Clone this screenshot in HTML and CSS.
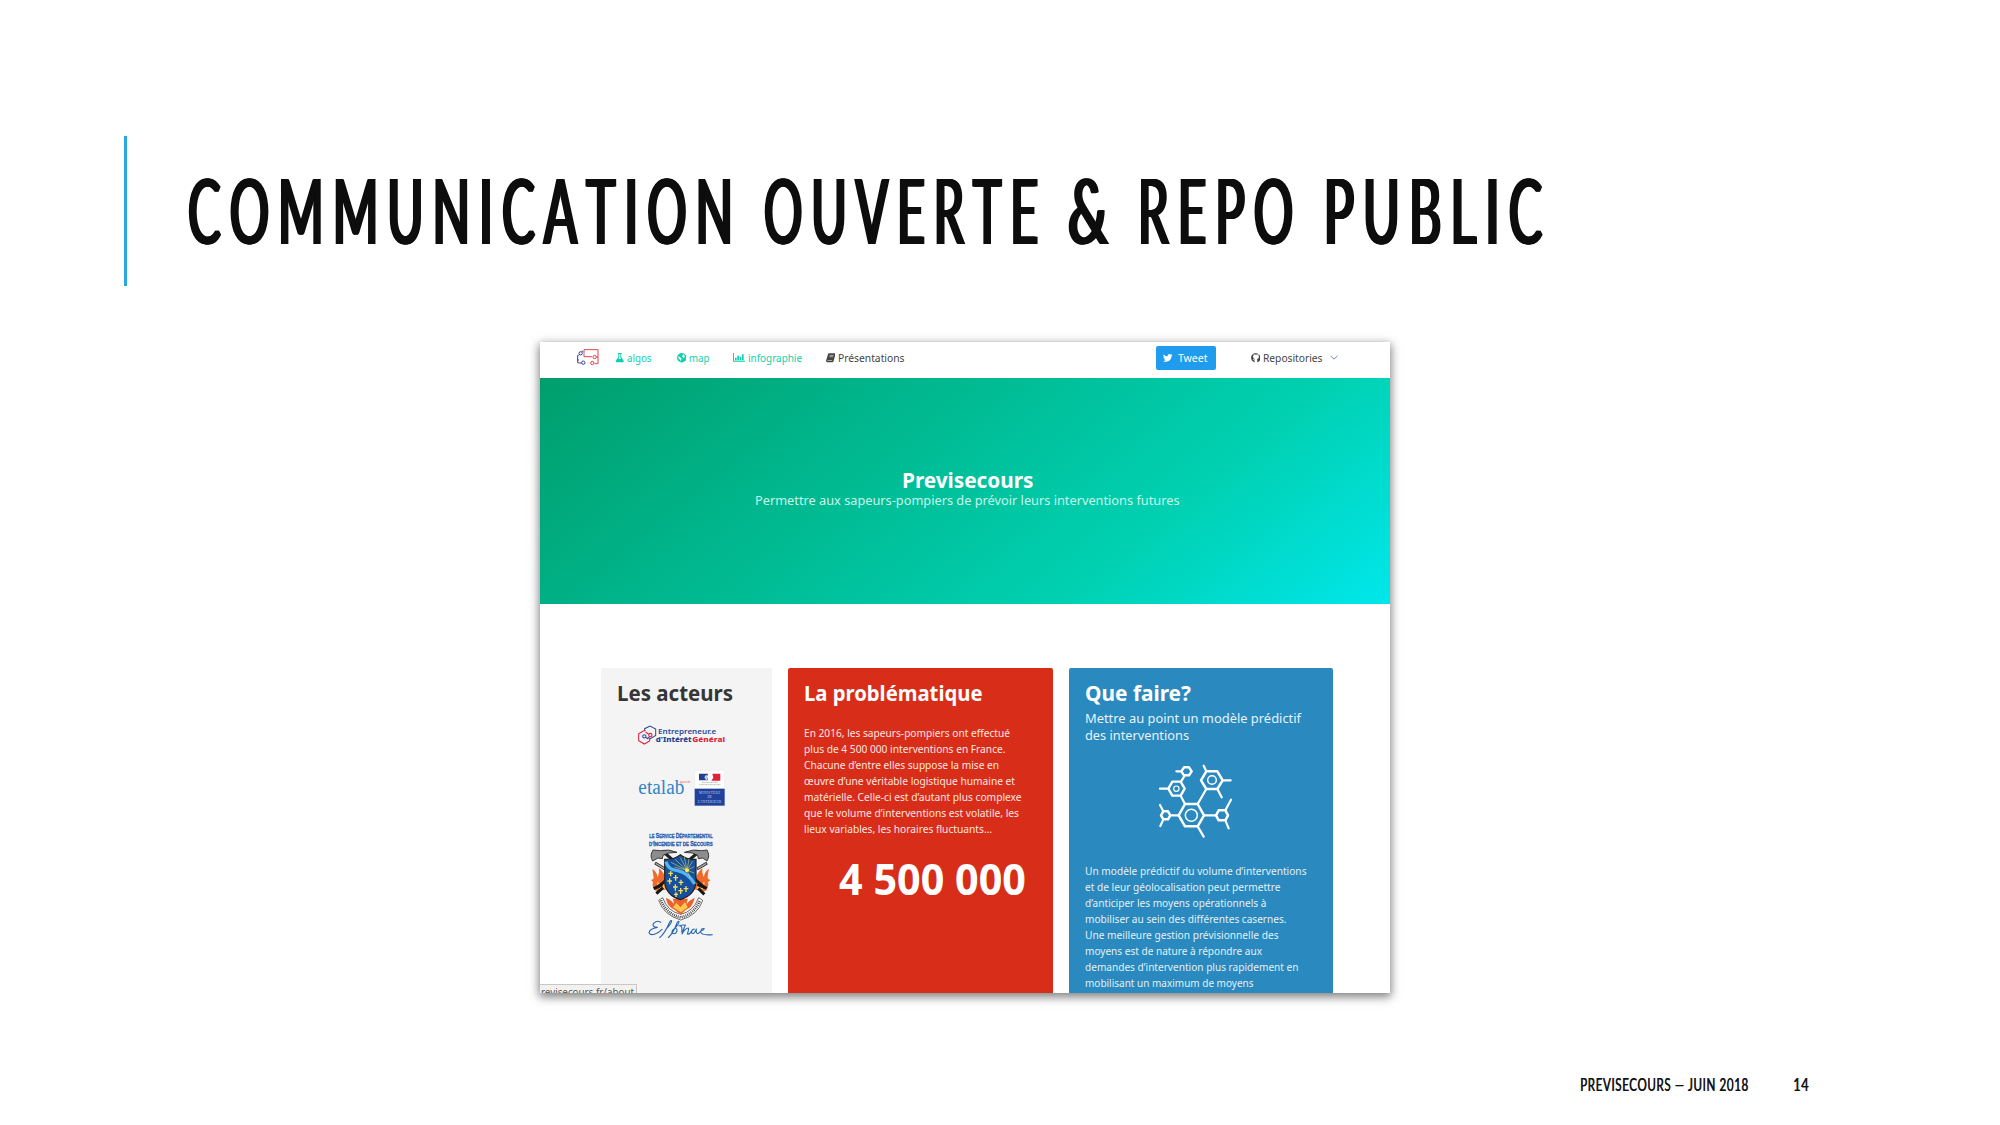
FILE: index.html
```html
<!DOCTYPE html>
<html lang="fr">
<head>
<meta charset="utf-8">
<title>Previsecours – Communication ouverte</title>
<link rel="stylesheet" href="styles.css">
</head>
<body>
<div class="slide">
  <header class="heading">
    <h1 class="title">
      <span class="word w1"><span data-width="545">COMMUNICATION</span></span>
      <span class="word w2"><span data-width="274">OUVERTE</span></span>
      <span class="word w3"><span data-width="40">&amp;</span></span>
      <span class="word w4"><span data-width="155">REPO</span></span>
      <span class="word w5"><span data-width="218">PUBLIC</span></span>
    </h1>
  </header>

  <section class="browser">
    <nav class="nav">
      <svg class="brand" viewBox="138 56 72 56" fill="none" stroke-width="3">
        <g stroke="#3d3f98"><path d="M148 77v-3M146 78h-3v14h4M143 92v8l5 1M155 66h4"/><circle cx="152" cy="72" r="5"/><circle cx="160" cy="100" r="5"/><path d="M148 101h7"/></g>
        <g stroke="#e0434f"><path d="M162 72V61h42v42h-10M162 73v9h24"/><circle cx="194" cy="83" r="5"/><circle cx="187" cy="101" r="5"/><path d="M199 83h5"/></g>
      </svg>
      <a class="item green algos">
        <svg class="ico" viewBox="0 0 24 27" fill="currentColor"><path d="M6.500 0h11v3H16v8l7.500 12q1 3-2 3.500h-19q-3-.5-2-3.500L8 11V3H6.500zM10.500 3v9l-2.500 4h8l-2.500-4V3z"/></svg>
        <span data-width="24.500">algos</span></a>
      <a class="item green map">
        <svg class="ico" viewBox="0 0 26 26"><circle cx="13" cy="13" r="13" fill="currentColor"/><path d="M16 3l5 3-2 2 3 2-3 4-4-3-1-3 2-2zM4 9l5 3 4 3-4 7-2-5-4-4z" fill="#fff"/></svg>
        <span data-width="20.500">map</span></a>
      <a class="item green info">
        <svg class="ico wide" viewBox="0 0 36 27" fill="currentColor"><path d="M0 0h3v23.500h33v3H0zM6 14h5v8H6zM13 8h5v14h-5zM20 11h5v11h-5zM27 4h5v18h-5z"/></svg>
        <span data-width="54">infographie</span></a>
      <a class="item dark pres">
        <svg class="ico book" viewBox="0 0 28 26" ><path d="M9 0h18q1.500 1 1 3l-6 20q-1 3-3 3H4q-4 0-4-4L6 3q1-3 3-3z" fill="currentColor"/><path d="M11 6h11M10 10h11M4 21h14" stroke="#fff" stroke-width="1.600"/></svg>
        <span data-width="66.500">Présentations</span></a>
      <a class="tweet">
        <svg class="bird" viewBox="0 0 24 20" fill="currentColor"><path d="M24 2.400q-1.200 1.700-2.500 2.500C22 13 16 19.500 7.600 19.500Q3.300 19.500 0 17.300q4 .2 7.200-2.100-3.400-.3-4.600-3.400h2.200Q1 10.600.9 6.900q1.200.6 2.200.6Q-.2 4.800 1.600.9q4 4.900 10.200 5.200C11 2.700 13.500 0 16.700 0q2 0 3.600 1.500L23.500.3q-.6 1.700-2.100 2.700z"/></svg>
        <span data-width="29.500">Tweet</span></a>
      <a class="item dark repos">
        <svg class="ico" viewBox="0 0 24 24"><path fill="currentColor" d="M12 .5C5.500.5.300 5.700.300 12.200c0 5.200 3.400 9.600 8 11.100.6.100.8-.2.800-.5v-4.300c-2.800.6-3.600-.7-4-1.900l.5-1.500c1.500.4 1.400 1.900 3.800 1.400.2-.8.400-1.300.8-1.500-2.500-.4-5-1.400-5-5.500 0-1.300.4-2.400 1.200-3.300-.3-.8-.3-2 .2-3.200 1 0 2 .4 3.200 1.200a11 11 0 0 1 5.600 0c1.200-.8 2.200-1.200 3.200-1.200.5 1.200.5 2.400.2 3.200.8.900 1.200 2 1.200 3.300 0 4.100-2.500 5.100-5 5.500.5.400.8 1.200.8 2.300v5.500c0 .3.200.6.800.5 4.600-1.500 8-5.900 8-11.100C23.700 5.700 18.500.5 12 .5z"/></svg>
        <span data-width="59.500">Repositories</span>
        <svg class="chev" viewBox="0 0 24 14" fill="none" stroke="#6383dc" stroke-width="3"><path d="M1.500 2L12 12 22.500 2"/></svg></a>
    </nav>

    <div class="hero">
      <h2 class="hero-title"><span data-width="131.500">Previsecours</span></h2>
      <p class="hero-sub"><span data-width="424.500">Permettre aux sapeurs-pompiers de prévoir leurs interventions futures</span></p>
    </div>

    <main class="cards">
      <article class="card grey">
        <h3><span data-width="116">Les acteurs</span></h3>
        <svg class="eig" viewBox="140 195 270 65">
          <g fill="none" stroke-width="3.200"><path d="M163 213v-7l16-8 17 9v19l-16 10-8-4" stroke="#2d4a9a"/><path d="M166 212l-6 0-15 9v21l17 10 16-9v-10" stroke="#e2203c"/><circle cx="162" cy="229" r="5" stroke="#2d4a9a"/><circle cx="180" cy="225" r="5" stroke="#e2203c"/><path d="M166 232l8 5" stroke="#2d4a9a"/><path d="M175 223l-9-7" stroke="#e2203c"/></g>
          <g class="eig-text"><text x="203" y="222" textLength="175" lengthAdjust="spacingAndGlyphs" fill="#2d4a9a">Entrepreneur.e</text>
          <text class="b" x="196" y="246" textLength="108" lengthAdjust="spacingAndGlyphs" fill="#24428f">d'Intérêt</text>
          <text class="b" x="306" y="246" textLength="98" lengthAdjust="spacingAndGlyphs" fill="#e2203c">Général</text></g>
        </svg>
        <svg class="etalab" viewBox="140 328 270 110">
          <text class="eta" x="144" y="403" textLength="138" lengthAdjust="spacingAndGlyphs">etalab</text>
          <text class="gouv" x="268" y="371" textLength="33" lengthAdjust="spacingAndGlyphs">gouv.fr</text>
          <path fill="#fff" stroke="#ddd" d="M313 332h90v55h-90z"/><path fill="#20429a" d="M313 387h90v51h-90z"/>
          <path fill="#233f94" d="M326 342h27l-3 10 4 10h-28z"/><path fill="#e02236" d="M366 342h24v21h-27l6-9z"/><path d="M346 347l-4 6 5 8h5l-3-8 2-6z" fill="#cfd5e5"/>
          <path d="M334 368h49M327 375h63" stroke="#9a9a9a" stroke-width="2" stroke-dasharray="3 1"/>
          <g class="min"><text x="358" y="404" textLength="64">MINISTÈRE</text><text x="358" y="416">DE</text><text x="358" y="431" textLength="70">L'INTÉRIEUR</text></g>
        </svg>
        <svg class="sdis" viewBox="175 80 200 335">
          <g class="sdis-text"><text x="179" y="112" textLength="190" lengthAdjust="spacingAndGlyphs">LE <tspan class="cap">S</tspan>ERVICE <tspan class="cap">D</tspan>ÉPARTEMENTAL</text>
          <text x="178" y="137" textLength="191" lengthAdjust="spacingAndGlyphs">D'<tspan class="cap">I</tspan>NCENDIE ET DE <tspan class="cap">S</tspan>ECOURS</text></g>
          <path fill="#f26a2a" d="M188 205q16 12 15 26 8-16 4-28 18 12 22 40l6 24-36 6q-14-14-9-28l-6-6q8-1 8-6-2-14-4-28zM358 205q-16 12-15 26-8-16-4-28-18 12-22 40l-8 24 38 6q12-14 8-28l8-6q-8-1-9-6 0-14 4-28z"/>
          <path fill="#fbc05a" d="M203 243q8 6 6 18 8-8 8-22l10 26-18 4q-8-10-6-26zM344 243q-8 6-6 18-8-8-8-22l-10 26 18 4q8-10 6-26z"/>
          <g stroke="#222" stroke-width="9"><path d="M225 158l120 104M323 158L203 262"/></g>
          <g stroke="#aaa" stroke-width="4"><path d="M196 188l30 18M352 188l-30 18" stroke="#222" stroke-width="9"/><path d="M198 189l26 16M350 189l-26 16"/></g>
          <path fill="#8d8d8d" stroke="#222" stroke-width="2.500" d="M190 149l22 2q24-6 50 5l-24 2-18 7-2 10-13-2-16 9q-10-16 1-33zM352 149l-16 2q-24-6-52 5l24 2 16 7 2 10 13-2 13 9q10-16 0-33z"/>
          <path d="M192 265l26-12M200 280l20-18M351 264l-28-12M344 282l-18-18" stroke="#151515" stroke-width="9"/>
          <path fill="#fff" stroke="#222" stroke-width="2" d="M207 300l12-8q14 41 54 50 38-8 54-50l12 8q-14 44-66 59-51-15-66-59z"/>
          <path d="M214 300q18 42 59 51 40-9 58-51" fill="none" stroke="#444" stroke-width="8" stroke-dasharray="3 3"/>
          <path fill="#ee612c" d="M229 292q18 8 24 20 0-10-4-17h46q-4 6-4 17 6-12 24-20-6 30-26 36l-16 15-18-15q-24-10-26-36z"/><path fill="#ffc84f" d="M250 321l10-14 12 14 14-16 8 16-20 15z"/>
          <path fill="#164f9e" stroke="#222" stroke-width="3.500" d="M225 177q28 2 47-14 20 16 47 14v66q-2 42-47 55-44-13-47-55z"/>
          <path fill="none" stroke="#55b4ec" stroke-width="10" d="M229 184q5 25 35 27 31 6 51 40"/>
          <g stroke="#e6dd53" stroke-width="1.700"><path d="M292 210l-48-24M292 210l-36-33M292 210l-20-38M292 210l-8-40M292 210l6-34M292 210l17-27M292 210l22-11M292 210l22 8M292 210l-38-10M292 210l10 24"/></g><circle cx="292" cy="210" r="6" fill="#f5ec54"/>
          <g stroke="#f5df50" stroke-width="4"><path d="M243 212v16M236 219h14M240 234v18M233 242h14M258 224v17M251 232h14M257 252v19M250 260h14M274 238v17M267 246h14M273 263v18M266 271h14M289 257v18M282 265h14M259 276v14M253 282h12"/></g>
          <path fill="none" stroke="#2466b0" stroke-width="3.300" stroke-linecap="round" stroke-linejoin="round" d="M213 366q-10-8-21 3-7 10 11 12-23 4-25 16 4 9 18 4 11-4 21-14M210 412q16-14 29-45 5-9 7-5-1 8-18 26M236 412q16-16 26-44 4-8 6-4 0 8-17 24M254 385q-10 6-6 14 10 4 14-7 1-6-4-8M272 377q7 0 4 18M268 376q10-3 19-2-6 14-10 27 10-18 19-18 2 4-3 18 8 2 15-13M314 386q-9 2-9 11 8 8 15-11-2 13 4 14 6-2 10-9 8 0 10-6-9-3-11 10 2 11 35 8"/>
        </svg>
      </article>

      <article class="card red">
        <h3><span data-width="178.500">La problématique</span></h3>
        <p class="text">
          <span data-width="206">En 2016, les sapeurs-pompiers ont effectué</span>
          <span data-width="201.500">plus de 4 500 000 interventions en France.</span>
          <span data-width="195">Chacune d’entre elles suppose la mise en</span>
          <span data-width="211">œuvre d’une véritable logistique humaine et</span>
          <span data-width="217.500">matérielle. Celle-ci est d’autant plus complexe</span>
          <span data-width="215">que le volume d’interventions est volatile, les</span>
          <span data-width="188">lieux variables, les horaires fluctuants…</span>
        </p>
        <p class="figure"><span data-width="187">4 500 000</span></p>
      </article>

      <article class="card blue">
        <h3><span data-width="106">Que faire?</span></h3>
        <p class="sub">
          <span data-width="216">Mettre au point un modèle prédictif</span>
          <span data-width="104">des interventions</span>
        </p>
        <svg class="molecule" viewBox="295 310 225 225" fill="none" stroke="#fff" stroke-width="7.500" stroke-linecap="round" stroke-linejoin="round">
          <path d="M376 433h38l19 34-19 33h-38l-19-33z"/><circle cx="395" cy="467" r="18" stroke-width="4.500"/>
          <path d="M440 335h33l16 27-16 26h-33l-16-26z"/><circle cx="457" cy="361" r="13" stroke-width="4.500"/>
          <path d="M338 366h25l12 21-12 21h-25l-12-21z" stroke-width="7"/><circle cx="350" cy="387" r="8" stroke-width="3.500"/>
          <path d="M373 323h15l8 12-8 12h-15l-8-12zM311 455h14l7 12-7 12h-14l-7-12zM477 452h20l8 15-8 15h-20l-8-15z"/>
          <path d="M365 335h-15M375 348l-11 18M326 387h-25M363 408l13 25M414 433l26-45M440 335l-8-17M489 362h24M473 388l13 25M433 467h36M497 452l17-32M497 482l10 24M414 500l18 31M357 467h-25M311 455l-10-19M311 479l-9 20" stroke-width="6.500"/>
        </svg>
        <p class="text">
          <span data-width="221.500">Un modèle prédictif du volume d’interventions</span>
          <span data-width="195.500">et de leur géolocalisation peut permettre</span>
          <span data-width="181.500">d’anticiper les moyens opérationnels à</span>
          <span data-width="201.500">mobiliser au sein des différentes casernes.</span>
          <span data-width="193.500">Une meilleure gestion prévisionnelle des</span>
          <span data-width="177">moyens est de nature à répondre aux</span>
          <span data-width="213.500">demandes d’intervention plus rapidement en</span>
          <span data-width="168.500">mobilisant un maximum de moyens</span>
        </p>
      </article>
    </main>
    <div class="status"><span data-width="93">revisecours.fr/about</span></div>
  </section>

  <footer class="footer"><span data-width="168">PREVISECOURS — JUIN 2018</span><span data-width="15.500">14</span></footer>
</div>
<script src="fit.js"></script>
</body>
</html>
```
FILE: styles.css
```css
* { box-sizing: border-box; margin: 0; padding: 0; }
html, body { width: 2000px; height: 1125px; overflow: hidden; background: #fff; }
body { font-family: "Noto Sans", sans-serif; }
svg { display: block; flex: none; }
[data-width] { display: inline-block; white-space: nowrap; transform-origin: 0 50%; flex: none; }

.slide { width: 2000px; height: 1125px; padding-top: 136px; display: flex; flex-direction: column; }

.heading { height: 150px; margin-left: 124px; border-left: 3px solid #29a9dc; padding: 18px 0 0 61px; }
.title { display: flex; font: 400 90.3px/110px Lato, sans-serif; color: #0d0d0d; }
.title [data-width] { letter-spacing: 17px; font-kerning: none; text-shadow: 3px 0 #0d0d0d, 1.5px 0 #0d0d0d, -1.5px 0 #0d0d0d, -3px 0 #0d0d0d; }
.word { flex: none; }
.w1 { width: 576px; }
.w2 { width: 304px; }
.w3 { width: 70px; }
.w4 { width: 186px; }

.browser { position: relative; width: 850px; height: 651px; margin: 56px 0 0 540px; overflow: hidden; background: #fff; box-shadow: 0 3px 9px 1px rgba(0,0,0,.5); }

.nav { height: 35.500px; display: flex; align-items: center; font-size: 10.6px; line-height: 16px; padding: 0 52px 4px 36px; }
.brand { width: 24px; height: 18.7px; margin-right: 15px; }
.item, .tweet { display: flex; align-items: center; }
.green { color: #10cfae; }
.dark { color: #444; }
.ico { width: 9.500px; height: 9.500px; margin-right: 2.500px; }
.ico.wide { width: 12px; height: 9px; margin-right: 3px; }
.map { margin-left: 25px; }
.info { margin-left: 23.500px; }
.pres { margin-left: 24px; }
.book { margin-right: 3px; }
.tweet { width: 60px; height: 24px; margin: 0 35px 0 auto; padding-left: 7.500px; border-radius: 2px; background: #209cee; color: #fff; }
.bird { width: 9.500px; height: 8px; margin-right: 5px; }
.chev { width: 8px; height: 5px; margin-left: 8px; }

.hero { height: 226.500px; padding-top: 90.500px; background: linear-gradient(141deg, #009e6c 0%, #00d1b2 71%, #00e7eb 100%); color: #fff; display: flex; flex-direction: column; align-items: center; }
.hero-title { font-size: 20.5px; line-height: 24px; margin-left: 5px; }
.hero-sub { font-size: 13px; line-height: 18px; margin-left: 4px; color: #c9f6ea; margin-top: -1px; }

.cards { display: flex; gap: 16px; height: 389px; padding: 63.500px 56.500px 0 61px; }
.card { height: 400px; padding: 13.500px 16px 0; border-radius: 2px; }
.grey { width: 171px; background: #f4f4f4; color: #363636; }
.red { width: 264.700px; background: #d82d18; color: #fff; }
.blue { width: 264.700px; background: #2a89be; color: #fff; }
.card h3 { font-size: 20.5px; line-height: 24px; height: 24px; }
.text { font-size: 10.6px; line-height: 15.960px; }
.text span, .sub span { display: block; width: max-content; }
.red .text { margin-top: 21px; color: #fbe6e2; }
.figure { font-size: 43px; font-weight: 700; line-height: 48px; margin: 17.500px 0 0 35px; }
.sub { font-size: 13px; line-height: 16.500px; margin-top: 5px; color: #e6f3fa; }
.molecule { width: 75px; height: 75px; margin: 20.300px 0 0 73.500px; }
.blue .text { margin-top: 25.700px; color: #e2f0f8; }

.eig { width: 90px; height: 21.700px; margin: 20px 0 0 19.700px; }
.eig-text { font: 600 23px "Noto Sans", sans-serif; }
.eig-text .b { font-weight: 800; }
.etalab { width: 90px; height: 36.700px; margin: 22.600px 0 0 19.700px; }
.eta { font: 60px "Liberation Serif", serif; fill: #3584c4; }
.gouv { font: 11px "Liberation Serif", serif; fill: #e26060; }
.min { font: 10px "Liberation Serif", serif; fill: #c8d2ea; text-anchor: middle; }
.sdis { width: 66.700px; height: 111.700px; margin: 20.700px 0 0 31.300px; }
.sdis-text { font: 700 17px "Liberation Sans Narrow", "Liberation Sans", sans-serif; fill: #1c57a8; stroke: #1c57a8; stroke-width: .8; }
.sdis-text .cap { font-size: 21px; }

.status { position: absolute; left: 0; bottom: 0; width: 97px; height: 9px; overflow: hidden; background: #f2f1f0; border: 1px solid #c9c7c5; border-width: 1px 1px 0 0; font-size: 10.6px; line-height: 14px; color: #555; padding-left: 1px; }

.footer { display: flex; gap: 45px; margin: 79px 0 0 1580px; font: 400 18.2px/24px Lato, sans-serif; color: #111; }
.footer span { letter-spacing: 1px; text-shadow: .7px 0 #111; }
```
FILE: fit.js
```js
// Squeeze every measured run of text to its column width.
document.querySelectorAll('[data-width]').forEach(function (el) {
  var target = parseFloat(el.dataset.width);
  var spacing = parseFloat(getComputedStyle(el).letterSpacing) || 0;
  var box = el.getBoundingClientRect().width;
  var scale = target / (box - spacing);
  el.style.transform = 'scaleX(' + scale + ')';
  el.style.marginRight = (target - box) + 'px';
});
```
